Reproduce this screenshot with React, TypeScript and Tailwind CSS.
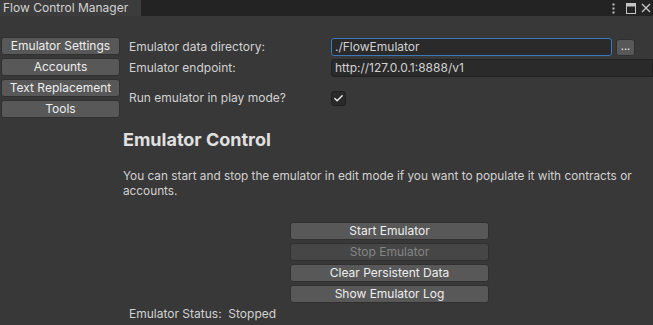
import { Check } from "lucide-react";

const font = { fontFamily: "Inter, 'Noto Sans', sans-serif" };

const tabs = ["Emulator Settings", "Accounts", "Text Replacement", "Tools"];
const actions = [
  { label: "Start Emulator" },
  { label: "Stop Emulator", disabled: true },
  { label: "Clear Persistent Data" },
  { label: "Show Emulator Log" },
];

function UnityButton({ label, disabled }: { label: string; disabled?: boolean }) {
  return (
    <button
      className={
        "flex h-[18px] w-full items-center justify-center rounded-[3px] border border-[#303030] text-[12px] leading-none " +
        (disabled ? "bg-[#464646] text-[#858585]" : "bg-[#585858] text-[#eeeeee]")
      }
    >
      {label}
    </button>
  );
}

export default function App() {
  return (
    <div className="flex h-[325px] w-[653px] flex-col overflow-hidden bg-[#383838] text-[#d2d2d2]" style={font}>
      {/* window tab strip */}
      <div className="flex h-[16px] shrink-0 items-stretch bg-[#232323]">
        <div className="flex w-[141px] items-center bg-[#3c3c3c] pl-[3px] text-[12px] text-[#d2d2d2]">
          Flow Control Manager
        </div>
        <div className="flex-1" />
        <div className="flex items-center pr-[2px] text-[#c4c4c4]">
          <svg width="3" height="11" viewBox="0 0 3 11">
            <rect x="0.5" y="0.5" width="2" height="2" fill="currentColor" />
            <rect x="0.5" y="4.5" width="2" height="2" fill="currentColor" />
            <rect x="0.5" y="8.5" width="2" height="2" fill="currentColor" />
          </svg>
          <svg width="10" height="11" viewBox="0 0 10 11" className="ml-[11px]">
            <rect x="0.5" y="0.5" width="9" height="10" fill="none" stroke="currentColor" />
            <rect x="0.5" y="0.5" width="9" height="3" fill="currentColor" />
          </svg>
          <svg width="10" height="10" viewBox="0 0 10 10" className="ml-[5px]">
            <path d="M1 1 L9 9 M9 1 L1 9" stroke="currentColor" strokeWidth="1.4" />
          </svg>
        </div>
      </div>

      <div className="flex min-h-0 flex-1">
        {/* section tabs */}
        <div className="flex w-[120px] shrink-0 flex-col gap-[3px] pl-[1px] pt-[21px]">
          {tabs.map((t) => (
            <UnityButton key={t} label={t} />
          ))}
        </div>

        <div className="flex min-w-0 flex-1 flex-col pl-[3px] pt-[22px]">
          {/* settings */}
          <div className="flex h-[18px] items-center">
            <span className="w-[208px] pl-[6px] text-[12px]">Emulator data directory:</span>
            <div className="flex h-[18px] w-[281px] items-center rounded-[3px] border border-[#3a79bb] bg-[#2a2a2a] pl-[3px] text-[12px]">
              ./FlowEmulator
            </div>
            <div className="ml-[4px] flex h-[17px] w-[19px] items-end justify-center rounded-[3px] border border-[#303030] bg-[#585858] pb-[3px] text-[11px] leading-none text-[#eeeeee]">
              ...
            </div>
          </div>
          <div className="mt-[3px] flex h-[18px] items-center">
            <span className="w-[208px] pl-[6px] text-[12px]">Emulator endpoint:</span>
            <div className="flex h-[18px] flex-1 items-center rounded-l-[3px] border border-[#212121] bg-[#2a2a2a] pl-[3px] text-[12px]">
              http://127.0.0.1:8888/v1
            </div>
          </div>
          <div className="mt-[12px] flex h-[18px] items-center">
            <span className="w-[208px] pl-[6px] text-[12px]">Run emulator in play mode?</span>
            <div className="flex h-[15px] w-[15px] items-center justify-center rounded-[3px] border border-[#212121] bg-[#2a2a2a]">
              <Check size={11} strokeWidth={3} className="text-[#eeeeee]" />
            </div>
          </div>

          <h2 className="mt-[19px] text-[18px] font-bold text-[#e0e0e0]">Emulator Control</h2>

          <p className="mt-[16px] pr-[10px] text-[11.8px] leading-[15px]">
            You can start and stop the emulator in edit mode if you want to populate it with contracts or accounts.
          </p>

          <div className="mt-[23px] ml-[167px] flex w-[199px] flex-col gap-[3px]">
            {actions.map((a) => (
              <UnityButton key={a.label} label={a.label} disabled={a.disabled} />
            ))}
          </div>

          <div className="mt-[2px] flex h-[18px] items-center pl-[6px] text-[12px]">
            Emulator Status:&nbsp;&nbsp;Stopped
          </div>
        </div>
      </div>
    </div>
  );
}
